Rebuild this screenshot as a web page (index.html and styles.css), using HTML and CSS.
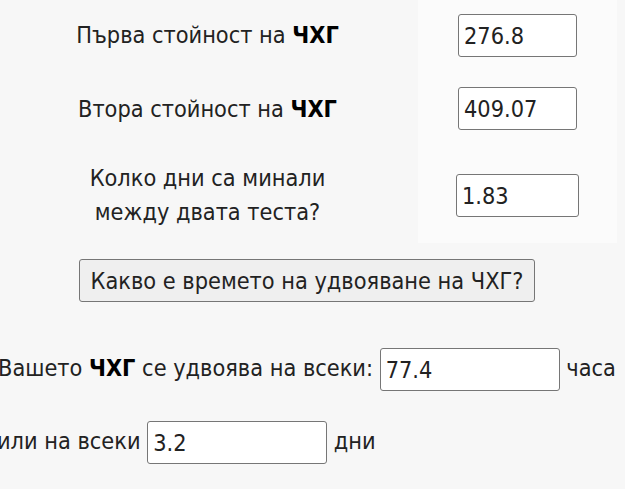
FILE: index.html
```html
<!DOCTYPE html>
<html lang="bg">
<head>
<meta charset="utf-8">
<title>Време на удвояване на ЧХГ</title>
<link rel="stylesheet" href="styles.css">
</head>
<body>
<div class="page">
  <div class="calc">
    <div class="label row1"><span>Първа стойност на <b>ЧХГ</b></span></div>
    <div class="field row1"><input class="in" type="text" value="276.8"></div>
    <div class="label row2"><span>Втора стойност на <b>ЧХГ</b></span></div>
    <div class="field row2"><input class="in" type="text" value="409.07"></div>
    <div class="label row3"><span>Колко дни са минали<br>между двата теста?</span></div>
    <div class="field row3"><input class="in in-wide" type="text" value="1.83"></div>
  </div>
  <div class="actions">
    <button class="btn" type="button">Какво е времето на удвояване на ЧХГ?</button>
  </div>
  <p class="result first">Вашето <b>ЧХГ</b> се удвоява на всеки: <input class="out" type="text" value="77.4"> часа</p>
  <p class="result second">или на всеки <input class="out" type="text" value="3.2"> дни</p>
</div>
</body>
</html>
```

FILE: styles.css
```css
html, body {
  margin: 0;
  padding: 0;
  background: #f7f7f7;
}

body {
  font-family: "DejaVu Sans Condensed", "DejaVu Sans", sans-serif;
  font-size: 23.3px;
  color: #222;
  overflow: hidden;
}

.page {
  width: 620px;
  margin-left: -3px;
}

b {
  color: #000;
  font-weight: bold;
}

.calc {
  display: grid;
  grid-template-columns: 421px 199px;
  grid-template-rows: 70px 77px 96px;
}

.label {
  display: flex;
  align-items: center;
  justify-content: center;
  text-align: center;
  line-height: 1.44;
}

.field {
  display: flex;
  align-items: center;
  justify-content: center;
  background: #fbfbfb;
}

.in, .out {
  box-sizing: border-box;
  height: 43px;
  margin: 0;
  padding: 0 5px;
  border: 1px solid #767676;
  border-radius: 3px;
  background: #fff;
  font-family: inherit;
  font-size: 23.3px;
  color: #222;
}

.in {
  width: 119px;
}

.in-wide {
  width: 123px;
}

.actions {
  display: flex;
  justify-content: center;
  margin-top: 16px;
}

.btn {
  box-sizing: border-box;
  height: 43px;
  padding: 0 11px;
  border: 1px solid #767676;
  border-radius: 3px;
  background: #efefef;
  font-family: inherit;
  font-size: 23.3px;
  color: #222;
}

.result {
  margin: 0;
  line-height: 43px;
  white-space: nowrap;
}

.result.first {
  margin-top: 44px;
  padding-left: 1px;
}

.result.second {
  margin-top: 28px;
}

.out {
  width: 180px;
  vertical-align: middle;
}
```
